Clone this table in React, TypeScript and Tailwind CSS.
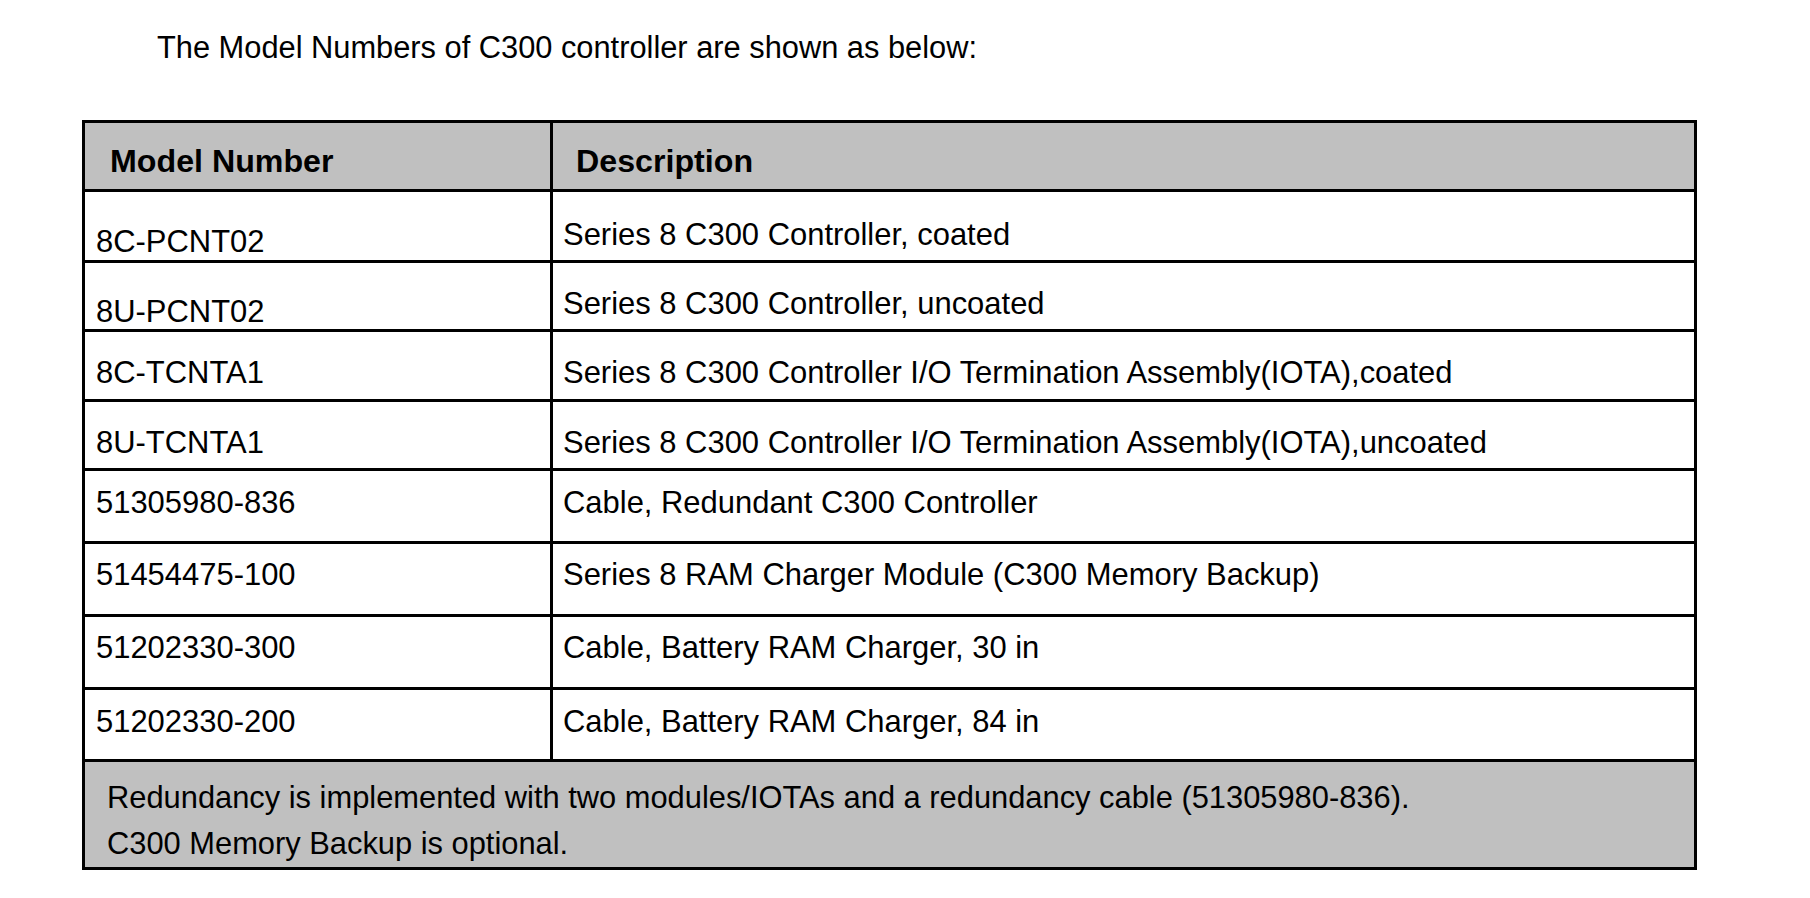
const rows = [
  {
    model: '8C-PCNT02',
    desc: 'Series 8 C300 Controller, coated',
    row: 'h-[71px]',
    modelPad: 'pt-[35px]',
    descPad: 'pt-[28px]',
  },
  {
    model: '8U-PCNT02',
    desc: 'Series 8 C300 Controller, uncoated',
    row: 'h-[69px]',
    modelPad: 'pt-[34px]',
    descPad: 'pt-[26px]',
  },
  {
    model: '8C-TCNTA1',
    desc: 'Series 8 C300 Controller I/O Termination Assembly(IOTA),coated',
    row: 'h-[70px]',
    modelPad: 'pt-[26px]',
    descPad: 'pt-[26px]',
  },
  {
    model: '8U-TCNTA1',
    desc: 'Series 8 C300 Controller I/O Termination Assembly(IOTA),uncoated',
    row: 'h-[69px]',
    modelPad: 'pt-[26px]',
    descPad: 'pt-[26px]',
  },
  {
    model: '51305980-836',
    desc: 'Cable, Redundant C300 Controller',
    row: 'h-[73px]',
    modelPad: 'pt-[17px]',
    descPad: 'pt-[17px]',
  },
  {
    model: '51454475-100',
    desc: 'Series 8 RAM Charger Module (C300 Memory Backup)',
    row: 'h-[73px]',
    modelPad: 'pt-[16px]',
    descPad: 'pt-[16px]',
  },
  {
    model: '51202330-300',
    desc: 'Cable, Battery RAM Charger, 30 in',
    row: 'h-[73px]',
    modelPad: 'pt-[16px]',
    descPad: 'pt-[16px]',
  },
  {
    model: '51202330-200',
    desc: 'Cable, Battery RAM Charger, 84 in',
    row: 'h-[72px]',
    modelPad: 'pt-[17px]',
    descPad: 'pt-[17px]',
  },
];

export default function App() {
  return (
    <div className="min-h-screen bg-white pt-[33px] font-['Liberation_Sans',Arial,sans-serif] text-black">
      <p className="ml-[157px] text-[30.8px] leading-none">
        The Model Numbers of C300 controller are shown as below:
      </p>

      {/* model number table */}
      <div className="ml-[82px] mt-[56px] w-[1615px] border-[3px] border-black">
        <div className="flex h-[69px] border-b-[3px] border-black bg-[#c0c0c0]">
          <div className="w-[468px] shrink-0 border-r-[3px] border-black pl-[25px] pt-[22px] text-[32.2px] font-bold leading-none">
            Model Number
          </div>
          <div className="flex-1 pl-[23px] pt-[22px] text-[32.2px] font-bold leading-none">
            Description
          </div>
        </div>

        {rows.map((r) => (
          <div key={r.model} className={`flex border-b-[3px] border-black ${r.row}`}>
            <div className={`w-[468px] shrink-0 border-r-[3px] border-black pl-[11px] text-[30.95px] leading-none ${r.modelPad}`}>
              {r.model}
            </div>
            <div className={`flex-1 pl-[10px] text-[30.95px] leading-none ${r.descPad}`}>
              {r.desc}
            </div>
          </div>
        ))}

        <div className="h-[105px] bg-[#c0c0c0] pl-[22px] pt-[13px] text-[30.85px] leading-[46px]">
          <div>Redundancy is implemented with two modules/IOTAs and a redundancy cable (51305980-836).</div>
          <div>C300 Memory Backup is optional.</div>
        </div>
      </div>
    </div>
  );
}
